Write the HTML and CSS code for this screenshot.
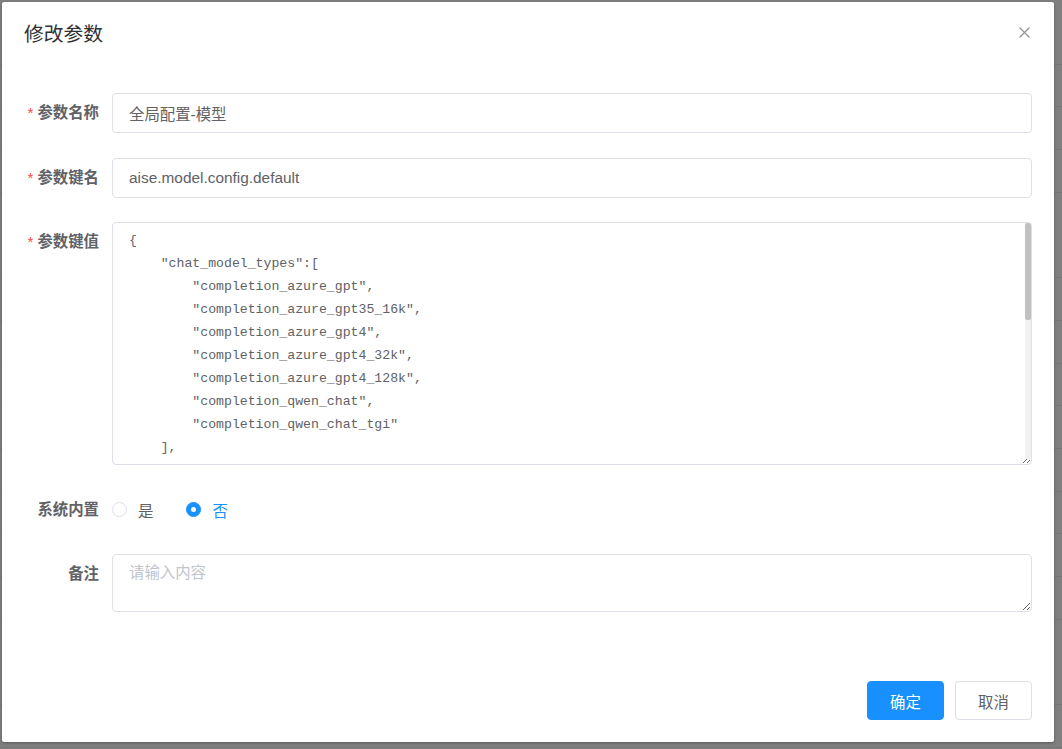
FILE: index.html
```html
<!DOCTYPE html>
<html lang="zh-CN">
<head>
<meta charset="utf-8">
<title>修改参数</title>
<link rel="stylesheet" href="styles.css">
</head>
<body>
<div class="backdrop">
  <div class="dialog">
    <div class="dlg-header">
      <span class="dlg-title">修改参数</span>
      <button class="dlg-close" type="button" aria-label="Close">
        <svg width="11" height="11" viewBox="0 0 11 11"><path d="M0.5 0.5 L10.5 10.5 M10.5 0.5 L0.5 10.5" stroke="#909399" stroke-width="1.2" fill="none"/></svg>
      </button>
    </div>
    <div class="dlg-body">
      <form class="form">
        <div class="form-item">
          <label class="form-label"><span class="req">*</span>参数名称</label>
          <div class="form-content"><input class="input" type="text" value="全局配置-模型"></div>
        </div>
        <div class="form-item">
          <label class="form-label"><span class="req">*</span>参数键名</label>
          <div class="form-content"><input class="input" type="text" value="aise.model.config.default"></div>
        </div>
        <div class="form-item">
          <label class="form-label"><span class="req">*</span>参数键值</label>
          <div class="form-content code-wrap"><textarea class="textarea code">{
    "chat_model_types":[
        "completion_azure_gpt",
        "completion_azure_gpt35_16k",
        "completion_azure_gpt4",
        "completion_azure_gpt4_32k",
        "completion_azure_gpt4_128k",
        "completion_qwen_chat",
        "completion_qwen_chat_tgi"
    ],
    "default_chat_model":"completion_azure_gpt35_16k",
    "embedding_model_types":[
        "embedding_azure_ada",
        "embedding_bge_large"
    ],
    "default_embedding_model":"embedding_azure_ada",
    "max_tokens":4096,
    "temperature":0.7,
    "top_p":0.95,
    "stream":true,
    "timeout":60000,
    "retry_times":3,
    "history_rounds":5,
    "enable_cache":false
}</textarea><div class="fake-scroll" aria-hidden="true"><div class="fake-thumb"></div></div></div>
        </div>
        <div class="form-item">
          <label class="form-label">系统内置</label>
          <div class="form-content radio-group">
            <label class="radio"><span class="radio-inner"></span><span class="radio-text">是</span></label>
            <label class="radio is-checked"><span class="radio-inner"></span><span class="radio-text">否</span></label>
          </div>
        </div>
        <div class="form-item">
          <label class="form-label">备注</label>
          <div class="form-content"><textarea class="textarea remark" placeholder="请输入内容"></textarea></div>
        </div>
      </form>
    </div>
    <div class="dlg-footer">
      <button type="button" class="btn btn-primary">确定</button>
      <button type="button" class="btn btn-default">取消</button>
    </div>
  </div>
</div>
</body>
</html>
```
FILE: styles.css
```css
html, body {
  margin: 0;
  padding: 0;
}
body {
  width: 1062px;
  height: 749px;
  overflow: hidden;
  background-color: #7f7f7f;
  background-image: repeating-linear-gradient(to bottom, transparent 0, transparent 41.7px, #777779 41.7px, #777779 42.7px);
  background-position: 0 22px;
  font-family: "Liberation Sans", "Noto Sans CJK SC", sans-serif;
}
.backdrop {
  padding: 2px 8px 7px 2px;
}
.dialog {
  width: 1052px;
  height: 740px;
  background: #fff;
  border-radius: 2px;
  box-shadow: 0 1px 3px rgba(0, 0, 0, 0.3);
  box-sizing: border-box;
  display: flex;
  flex-direction: column;
}
.dlg-header {
  display: flex;
  justify-content: space-between;
  align-items: flex-start;
  padding: 20px 24px 10px 22px;
}
.dlg-title {
  font-size: 19.8px;
  line-height: 25px;
  color: #303133;
}
.dlg-close {
  border: 0;
  background: transparent;
  padding: 0;
  margin-top: 5px;
  width: 11px;
  height: 11px;
  display: flex;
  cursor: pointer;
}
.dlg-body {
  padding: 36px 22px 0 20px;
  flex: 1;
}
.form-item {
  display: flex;
  margin-bottom: 24.5px;
}
.form-label {
  width: 90px;
  flex: none;
  box-sizing: border-box;
  padding-right: 13px;
  text-align: right;
  font-size: 15.4px;
  line-height: 40px;
  font-weight: bold;
  color: #606266;
  white-space: nowrap;
}
.req {
  color: #ff4949;
  margin-right: 4px;
  font-weight: normal;
}
.form-content {
  flex: 1;
  min-width: 0;
}
.input {
  display: block;
  width: 100%;
  height: 40px;
  box-sizing: border-box;
  border: 1px solid #dcdfe6;
  border-radius: 4px;
  padding: 0 16px;
  font-family: "Liberation Sans", "Noto Sans CJK SC", sans-serif;
  font-size: 15.4px;
  color: #606266;
  outline: none;
  background: #fff;
}
.textarea {
  display: block;
  width: 100%;
  box-sizing: border-box;
  border: 1px solid #dcdfe6;
  border-radius: 4px;
  padding: 5.5px 16px;
  font-family: "Liberation Sans", "Noto Sans CJK SC", sans-serif;
  font-size: 15.4px;
  line-height: 23.1px;
  color: #606266;
  outline: none;
  background: #fff;
  margin: 0;
}
.textarea::placeholder {
  color: #c0c4cc;
}
.code-wrap {
  position: relative;
}
.code {
  height: 243px;
  font-family: "Liberation Mono", "Noto Sans CJK SC", monospace;
  font-size: 13.2px;
  white-space: pre;
  overflow: hidden;
  padding-left: 16px;
}
.fake-scroll {
  position: absolute;
  top: 1px;
  right: 1px;
  bottom: 6px;
  width: 6px;
  background: #f1f1f1;
  pointer-events: none;
}
.fake-thumb {
  height: 97px;
  background: #c1c1c1;
  border-radius: 2px;
}
.remark {
  height: 58px;
}
.radio-group {
  display: flex;
  align-items: center;
  height: 40px;
}
.radio {
  display: flex;
  align-items: center;
  margin-right: 33px;
  cursor: pointer;
}
.radio-inner {
  width: 15px;
  height: 15px;
  box-sizing: border-box;
  border: 1px solid #dcdfe6;
  border-radius: 50%;
  background: #fff;
  display: flex;
  align-items: center;
  justify-content: center;
}
.radio.is-checked .radio-inner {
  background: #1890ff;
  border-color: #1890ff;
}
.radio.is-checked .radio-inner::after {
  content: "";
  width: 5px;
  height: 5px;
  border-radius: 50%;
  background: #fff;
}
.radio-text {
  padding-left: 11px;
  font-size: 15.4px;
  color: #606266;
}
.radio.is-checked .radio-text {
  color: #1890ff;
}
.dlg-footer {
  display: flex;
  justify-content: flex-end;
  gap: 11px;
  padding: 0 22px 22px 22px;
}
.btn {
  width: 77px;
  height: 39px;
  box-sizing: border-box;
  border-radius: 4px;
  font-family: "Liberation Sans", "Noto Sans CJK SC", sans-serif;
  font-size: 15.4px;
  cursor: pointer;
  padding: 0;
}
.btn-primary {
  background: #1890ff;
  border: 1px solid #1890ff;
  color: #fff;
}
.btn-default {
  background: #fff;
  border: 1px solid #dcdfe6;
  color: #606266;
}
```
